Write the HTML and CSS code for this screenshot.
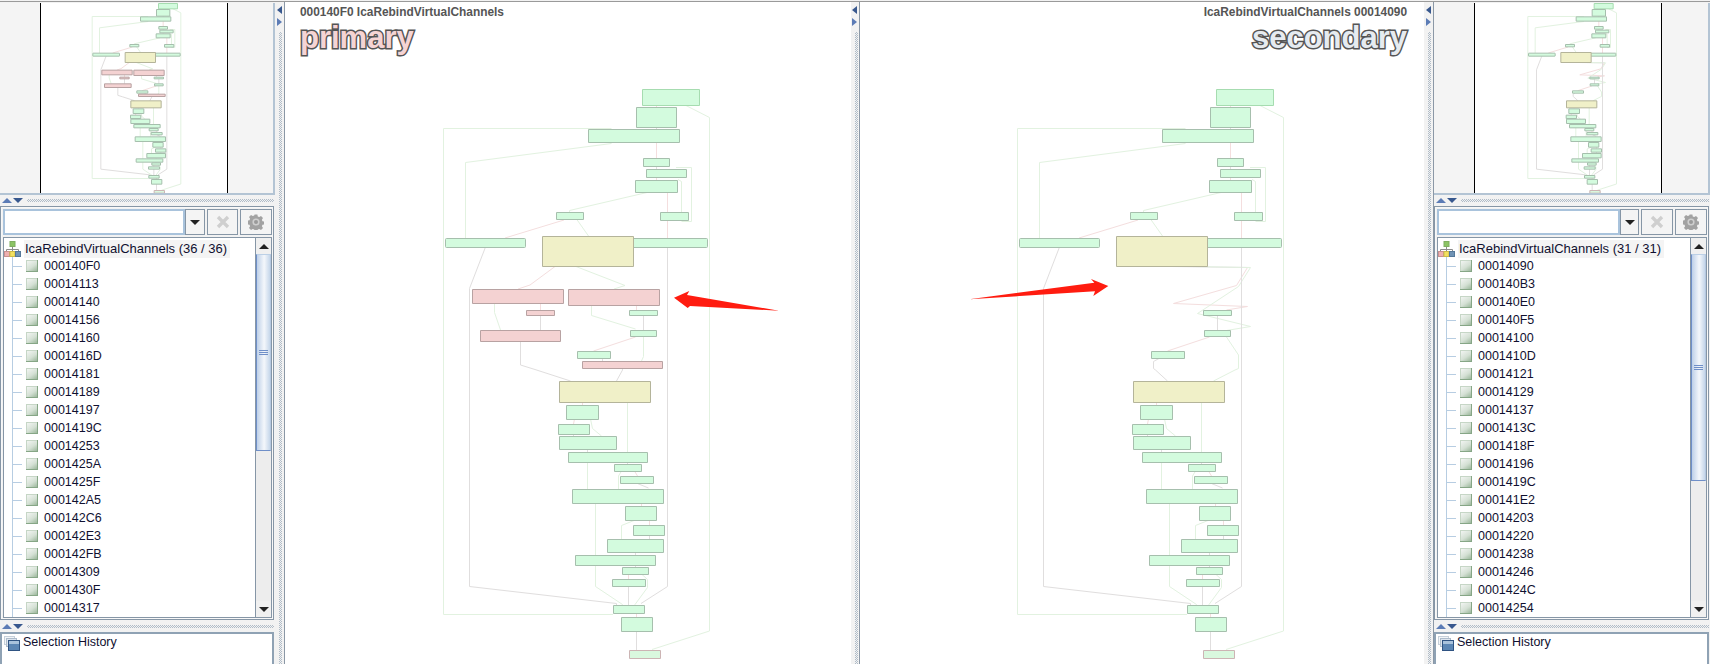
FILE: index.html
```html
<!DOCTYPE html>
<html lang="en">
<head>
  <meta charset="UTF-8">
  <title>Flow Graphs - IcaRebindVirtualChannels</title>
  <link rel="stylesheet" href="styles.css">
</head>
<body>

  <svg class="svg-defs" aria-hidden="true">
    <defs>
      <!-- blocks and edges both functions have in common, in primary coordinates -->
      <g id="common-graph">
        <polyline class="eg" points="685,105 709.5,117.5 709.5,631 652,649.5"/>
        <polyline class="ep" points="656.5,105 656.5,108"/>
        <polyline class="ek" points="656.5,127 656.5,130"/>
        <polyline class="ep" points="656.5,142 656.5,158"/>
        <polyline class="eg" points="611.5,128.5 443.5,128.5 443.5,614.5 613,614.5"/>
        <polyline class="eg" points="611.5,143.5 465.5,162.5 465.5,238"/>
        <polyline class="ek" points="656.5,166 656.5,170"/>
        <polyline class="ep" points="656.5,177 656.5,181"/>
        <polyline class="eg" points="676,167.5 691.5,167.5 691.5,221.5 681.5,221.5"/>
        <polyline class="eg" points="678,179.5 681.5,181.5 681.5,212"/>
        <polyline class="eg" points="647,192.5 569.5,210.5 569.5,212"/>
        <polyline class="ep" points="667.5,192 667.5,238"/>
        <polyline class="ek" points="667.5,247 667.5,586.5 641,603.5"/>
        <polyline class="ep" points="564,220 505,238"/>
        <polyline class="eg" points="576.5,219 588.5,236"/>
        <polyline class="ek" points="485.5,247 469.5,288.5 469.5,586.5 616.5,603.5 616.5,606"/>
        <polyline class="ek" points="643.5,315 643.5,330"/>
        <polyline class="ep" points="635.5,337 593.5,351"/>
        <polyline class="ep" points="582.5,402 582.5,405"/>
        <polyline class="eg" points="627.5,402 627.5,452"/>
        <polyline class="ep" points="574.5,419 573.5,424"/>
        <polyline class="eg" points="590.5,419 592.5,428.5 601.5,436"/>
        <polyline class="ek" points="573.5,434 573.5,436"/>
        <polyline class="ek" points="587.5,449 587.5,452"/>
        <polyline class="eg" points="587.5,462 587.5,489"/>
        <polyline class="ek" points="627.5,462 627.5,465"/>
        <polyline class="eg" points="621.5,471 618.5,476 618.5,489"/>
        <polyline class="ep" points="634.5,471 637.5,476"/>
        <polyline class="ek" points="637.5,483.5 648.5,488"/>
        <polyline class="ep" points="641.5,503 641.5,506"/>
        <polyline class="eg" points="595.5,503 595.5,586.5 622.5,604.5 622.5,606"/>
        <polyline class="eg" points="634,520.5 621.5,525.5 621.5,539"/>
        <polyline class="ep" points="649.5,520 649.5,525"/>
        <polyline class="ek" points="649.5,535 649.5,539"/>
        <polyline class="ek" points="635.5,552 635.5,555"/>
        <polyline class="ek" points="635.5,565 635.5,567"/>
        <polyline class="ep" points="628.5,574 628.5,579"/>
        <polyline class="eg" points="641.5,574 647.5,579.5 647.5,587.5 635,604.5 635,606"/>
        <polyline class="ek" points="628.5,586 628.5,605"/>
        <polyline class="ep" points="636.5,613 636.5,617"/>
        <polyline class="ek" points="636.5,631 636.5,650"/>

        <rect class="n-top" x="642.5" y="89.5" width="57" height="16"/>
        <rect class="n-g" x="636.5" y="107.5" width="40" height="20"/>
        <rect class="n-g" x="588.5" y="129.5" width="91" height="13"/>
        <rect class="n-g" x="643.5" y="158.5" width="26" height="8"/>
        <rect class="n-g" x="646.5" y="169.5" width="40" height="8"/>
        <rect class="n-g" x="635.5" y="180.5" width="42" height="12"/>
        <rect class="n-g" x="556.5" y="212.5" width="27" height="7"/>
        <rect class="n-g" x="660.5" y="212.5" width="28" height="8"/>
        <rect class="n-g" x="445.5" y="238.5" width="80" height="9" rx="1"/>
        <rect class="n-g" x="630.5" y="238.5" width="77" height="9" rx="1"/>
        <rect class="n-y" x="542.5" y="236.5" width="91" height="30"/>
        <rect class="n-g" x="629.5" y="310.5" width="28" height="5"/>
        <rect class="n-g" x="630.5" y="330.5" width="26" height="6"/>
        <rect class="n-g" x="577.5" y="351.5" width="33" height="7"/>
        <rect class="n-y" x="559.5" y="381.5" width="91" height="21"/>
        <rect class="n-g" x="566.5" y="405.5" width="32" height="14"/>
        <rect class="n-g" x="558.5" y="424.5" width="31" height="10"/>
        <rect class="n-g" x="559.5" y="436.5" width="57" height="13"/>
        <rect class="n-g" x="568.5" y="452.5" width="79" height="10"/>
        <rect class="n-g" x="614.5" y="464.5" width="27" height="7"/>
        <rect class="n-g" x="620.5" y="476.5" width="33" height="7"/>
        <rect class="n-g" x="572.5" y="489.5" width="91" height="14"/>
        <rect class="n-g" x="625.5" y="506.5" width="31" height="14"/>
        <rect class="n-g" x="633.5" y="525.5" width="31" height="10"/>
        <rect class="n-g" x="607.5" y="539.5" width="56" height="13"/>
        <rect class="n-g" x="575.5" y="555.5" width="80" height="10"/>
        <rect class="n-g" x="622.5" y="567.5" width="26" height="7"/>
        <rect class="n-g" x="612.5" y="579.5" width="33" height="7"/>
        <rect class="n-g" x="613.5" y="605.5" width="31" height="8"/>
        <rect class="n-g" x="621.5" y="617.5" width="31" height="14"/>
        <rect class="n-end" x="629.5" y="650.5" width="31" height="8"/>
      </g>

      <g id="primary-graph">
        <polyline class="ep" points="555,266.5 530,285 518,289"/>
        <polyline class="eg" points="576,266.5 625,285.5 614,289"/>
        <polyline class="eg" points="494.5,303 494.5,312.5 500.5,330"/>
        <polyline class="ep" points="540.5,303 540.5,310"/>
        <polyline class="ek" points="540.5,315 540.5,330"/>
        <polyline class="eg" points="591.5,305 591.5,315.5 635.5,329"/>
        <polyline class="ep" points="636.5,305 636.5,310"/>
        <polyline class="eg" points="643.5,336 643.5,356.5 641.5,361"/>
        <polyline class="ek" points="602.5,358 602.5,361"/>
        <polyline class="ek" points="520.5,341 520.5,365 535,369.5 570.5,381"/>
        <polyline class="ek" points="622.5,368 622.5,370 616.5,381"/>
        <use href="#common-graph"/>
        <rect class="n-r" x="472.5" y="289.5" width="91" height="14"/>
        <rect class="n-r" x="568.5" y="289.5" width="91" height="16"/>
        <rect class="n-r" x="526.5" y="310.5" width="28" height="5"/>
        <rect class="n-r" x="480.5" y="330.5" width="80" height="11"/>
        <rect class="n-r" x="582.5" y="361.5" width="80" height="7"/>
      </g>

      <g id="secondary-graph">
        <polyline class="ek" points="1173,266.5 1247.5,267.5"/>
        <polyline class="ep" points="1247.5,267.5 1236.5,285.5 1173.5,303.5 1247.5,306.5 1226.5,310"/>
        <polyline class="eg" points="1193,266.5 1250.5,267.5 1238.5,286.5 1197.5,313.5 1250.5,326.5 1226.5,330.5"/>
        <polyline class="eg" points="1226.5,337 1238.5,355 1238.5,368.5 1235,370 1213.5,381"/>
        <polyline class="ek" points="1159,358.5 1153.5,361.5 1153.5,368.5 1155.5,370 1167.5,381"/>
        <use href="#common-graph" transform="translate(574 0)"/>
      </g>

      <symbol id="icon-callgraph" viewBox="0 0 17 16">
        <path d="M8.5 5.5v3M2.500 11V8.500h12V11M8.500 8.500V11" fill="none" stroke="#8c8c8c"/>
        <rect x="6" y="0.500" width="5" height="5" fill="#8cc464" stroke="#7fae60"/>
        <rect x="0.500" y="10.500" width="5" height="5" fill="#eeb0b0" stroke="#c89090"/>
        <rect x="6" y="10.500" width="5" height="5" fill="#f2e060" stroke="#cdbb48"/>
        <rect x="11.500" y="10.500" width="5" height="5" fill="#6f93b5" stroke="#55789a"/>
      </symbol>

      <symbol id="icon-history" viewBox="0 0 16 15">
        <rect x="0.500" y="0.500" width="10" height="8" fill="#f2f5f8" stroke="#c6d0da"/>
        <rect x="2.500" y="2.500" width="10" height="8" fill="#dde5ee" stroke="#aebccb"/>
        <rect x="4.500" y="4.500" width="11" height="10" fill="#5c86b4" stroke="#2f5382"/>
        <rect x="5" y="5" width="10" height="3" fill="#a9c2dc"/>
      </symbol>

      <symbol id="icon-clear" viewBox="0 0 14 14">
        <path d="M2 2l10 10M12 2L2 12" stroke="#cfcfcf" stroke-width="3.400" fill="none"/>
      </symbol>

      <symbol id="icon-gear" viewBox="0 0 16 16">
        <path d="M6.600 0.500h2.800l.4 2 1.400.6 1.800-1.100 2 2-1.100 1.800.6 1.400 2 .4v2.800l-2 .4-.6 1.400 1.100 1.800-2 2-1.800-1.100-1.400.6-.4 2H6.600l-.4-2-1.400-.6-1.800 1.100-2-2 1.100-1.800-.6-1.400-2-.4V6.600l2-.4.6-1.400L1 3l2-2 1.800 1.100 1.400-.6z" fill="#a2a2a2"/>
        <circle cx="8" cy="8" r="3.600" fill="#cfcfcf"/>
        <circle cx="8" cy="8" r="2" fill="#9a9a9a"/>
      </symbol>
    </defs>
  </svg>

  <div class="app">

    <aside class="side">
      <div class="minimap">
        <svg class="minimap-view" viewBox="290 88 558 570"><use href="#primary-graph"/></svg>
      </div>
      <div class="hsplit"><i class="tri-up"></i><i class="tri-down"></i><b class="dots"></b></div>
      <section class="tree-panel">
        <div class="search">
          <input class="search-box" type="text" aria-label="Search">
          <button class="search-drop"><i class="tri-black"></i></button>
          <button class="search-btn"><svg class="btn-icon-x"><use href="#icon-clear"/></svg></button>
          <button class="search-btn"><svg class="btn-icon-gear"><use href="#icon-gear"/></svg></button>
        </div>
        <div class="tree">
          <div class="tree-body">
            <div class="tree-root">
              <svg class="root-icon"><use href="#icon-callgraph"/></svg>
              <span class="root-label">IcaRebindVirtualChannels (36 / 36)</span>
            </div>
            <ul class="tree-list">
              <li><i class="leaf"></i>000140F0</li>
              <li><i class="leaf"></i>00014113</li>
              <li><i class="leaf"></i>00014140</li>
              <li><i class="leaf"></i>00014156</li>
              <li><i class="leaf"></i>00014160</li>
              <li><i class="leaf"></i>0001416D</li>
              <li><i class="leaf"></i>00014181</li>
              <li><i class="leaf"></i>00014189</li>
              <li><i class="leaf"></i>00014197</li>
              <li><i class="leaf"></i>0001419C</li>
              <li><i class="leaf"></i>00014253</li>
              <li><i class="leaf"></i>0001425A</li>
              <li><i class="leaf"></i>0001425F</li>
              <li><i class="leaf"></i>000142A5</li>
              <li><i class="leaf"></i>000142C6</li>
              <li><i class="leaf"></i>000142E3</li>
              <li><i class="leaf"></i>000142FB</li>
              <li><i class="leaf"></i>00014309</li>
              <li><i class="leaf"></i>0001430F</li>
              <li><i class="leaf"></i>00014317</li>
            </ul>
          </div>
          <div class="scrollbar">
            <div class="scroll-btn"><i class="tri-black-up"></i></div>
            <div class="thumb thumb-primary"><i class="grip"></i></div>
            <div class="track"></div>
            <div class="scroll-btn"><i class="tri-black"></i></div>
          </div>
        </div>
      </section>
      <div class="hsplit hsplit-low"><i class="tri-up"></i><i class="tri-down"></i><b class="dots"></b></div>
      <section class="history">
        <svg class="history-icon"><use href="#icon-history"/></svg>
        <span>Selection History</span>
      </section>
    </aside>

    <div class="vsplit"><i class="tri-left"></i><i class="tri-right"></i><b class="vdots"></b></div>

    <main class="graph graph-primary">
      <svg class="graph-canvas" viewBox="285 0 566 664">
        <use href="#primary-graph"/>
        <polygon class="arrow" points="674,297.700 689.300,291 687,295 779,310.700 690,306 687.700,308"/>
      </svg>
      <div class="graph-head">
        <div class="graph-title">000140F0 IcaRebindVirtualChannels</div>
        <div class="graph-tag tag-primary">primary</div>
      </div>
    </main>

    <div class="vsplit vsplit-mid"><i class="tri-left"></i><i class="tri-right"></i><b class="vdots"></b></div>

    <main class="graph graph-secondary">
      <svg class="graph-canvas" viewBox="860 0 564 664">
        <use href="#secondary-graph"/>
        <polygon class="arrow" points="1108.300,286 1091,279 1094.300,282.700 969.300,299.300 1095,291.300 1093.300,296"/>
      </svg>
      <div class="graph-head head-right">
        <div class="graph-title">IcaRebindVirtualChannels 00014090</div>
        <div class="graph-tag tag-secondary">secondary</div>
      </div>
    </main>

    <div class="vsplit"><i class="tri-left"></i><i class="tri-right"></i><b class="vdots"></b></div>

    <aside class="side side-right">
      <div class="minimap">
        <svg class="minimap-view" viewBox="859 88 558 570"><use href="#secondary-graph"/></svg>
      </div>
      <div class="hsplit"><i class="tri-up"></i><i class="tri-down"></i><b class="dots"></b></div>
      <section class="tree-panel">
        <div class="search">
          <input class="search-box" type="text" aria-label="Search">
          <button class="search-drop"><i class="tri-black"></i></button>
          <button class="search-btn"><svg class="btn-icon-x"><use href="#icon-clear"/></svg></button>
          <button class="search-btn"><svg class="btn-icon-gear"><use href="#icon-gear"/></svg></button>
        </div>
        <div class="tree">
          <div class="tree-body">
            <div class="tree-root">
              <svg class="root-icon"><use href="#icon-callgraph"/></svg>
              <span class="root-label">IcaRebindVirtualChannels (31 / 31)</span>
            </div>
            <ul class="tree-list">
              <li><i class="leaf"></i>00014090</li>
              <li><i class="leaf"></i>000140B3</li>
              <li><i class="leaf"></i>000140E0</li>
              <li><i class="leaf"></i>000140F5</li>
              <li><i class="leaf"></i>00014100</li>
              <li><i class="leaf"></i>0001410D</li>
              <li><i class="leaf"></i>00014121</li>
              <li><i class="leaf"></i>00014129</li>
              <li><i class="leaf"></i>00014137</li>
              <li><i class="leaf"></i>0001413C</li>
              <li><i class="leaf"></i>0001418F</li>
              <li><i class="leaf"></i>00014196</li>
              <li><i class="leaf"></i>0001419C</li>
              <li><i class="leaf"></i>000141E2</li>
              <li><i class="leaf"></i>00014203</li>
              <li><i class="leaf"></i>00014220</li>
              <li><i class="leaf"></i>00014238</li>
              <li><i class="leaf"></i>00014246</li>
              <li><i class="leaf"></i>0001424C</li>
              <li><i class="leaf"></i>00014254</li>
            </ul>
          </div>
          <div class="scrollbar">
            <div class="scroll-btn"><i class="tri-black-up"></i></div>
            <div class="thumb thumb-secondary"><i class="grip"></i></div>
            <div class="track"></div>
            <div class="scroll-btn"><i class="tri-black"></i></div>
          </div>
        </div>
      </section>
      <div class="hsplit hsplit-low"><i class="tri-up"></i><i class="tri-down"></i><b class="dots"></b></div>
      <section class="history">
        <svg class="history-icon"><use href="#icon-history"/></svg>
        <span>Selection History</span>
      </section>
    </aside>

  </div>

</body>
</html>
```

FILE: styles.css
```css
* {
  box-sizing: border-box;
}
html, body {
  margin: 0;
  height: 100%;
  overflow: hidden;
}
body {
  background-color: #f2f2f2;
  font-family: "Liberation Sans", Arial, sans-serif;
  font-size: 12.5px;
  color: #101030;
  padding-top: 1px;
}
.svg-defs {
  position: absolute;
  width: 0;
  height: 0;
}
.app {
  display: flex;
  height: 663px;
  border-top: 1px solid #9a9a9a;
}

/* side columns */
.side {
  width: 275px;
  flex: none;
  display: flex;
  flex-direction: column;
  padding-top: 1px;
}
.side-right {
  width: 276px;
}
.minimap {
  height: 192px;
  flex: none;
  padding-left: 40px;
  background-color: #f4f4f4;
  border-right: 2px solid #b3c4d4;
  border-bottom: 2px solid #b3c4d4;
}
.minimap-view {
  display: block;
  width: 188px;
  height: 190px;
  background-color: #fff;
  border-left: 1px solid #000;
  border-right: 1px solid #000;
}

/* splitters */
.hsplit {
  height: 11px;
  flex: none;
  display: flex;
  align-items: center;
  gap: 1px;
  padding-left: 2px;
}
.hsplit-low {
  height: 12px;
}
.dots {
  flex: 1;
  height: 3px;
  margin: 0 1px 0 3px;
  background-image: conic-gradient(#b0bcc8 25%, transparent 0 50%, #b0bcc8 0 75%, transparent 0);
  background-size: 2px 2px;
}
.tri-up, .tri-down, .tri-black, .tri-black-up {
  display: block;
  width: 0;
  height: 0;
  border-left: 5px solid transparent;
  border-right: 5px solid transparent;
}
.tri-up {
  border-bottom: 5px solid #5c7cb6;
}
.tri-down {
  border-top: 5px solid #38588e;
}
.tri-black {
  border-top: 5px solid #222;
}
.tri-black-up {
  border-bottom: 5px solid #222;
}
.vsplit {
  width: 10px;
  flex: none;
  position: relative;
  border-right: 1px solid #8b98a6;
  padding: 4px 0 0 2px;
}
.vsplit-mid {
  width: 9px;
  padding-left: 1px;
}
.tri-left, .tri-right {
  display: block;
  width: 0;
  height: 0;
  border-top: 4px solid transparent;
  border-bottom: 4px solid transparent;
  margin-bottom: 4px;
}
.tri-left {
  border-right: 5px solid #38588e;
}
.tri-right {
  border-left: 5px solid #5c7cb6;
}
.vdots {
  position: absolute;
  left: 4px;
  top: 30px;
  bottom: 0;
  width: 3px;
  background-image: conic-gradient(#b0bcc8 25%, transparent 0 50%, #b0bcc8 0 75%, transparent 0);
  background-size: 2px 2px;
}

/* search row + tree */
.tree-panel {
  height: 414px;
  flex: none;
  margin-right: 1px;
  border: 1px solid #8696a6;
  box-shadow: 0 0 0 1px #f8f8f8 inset;
  padding: 2px 1px 1px 2px;
  display: flex;
  flex-direction: column;
}
.search {
  display: flex;
  height: 27px;
  flex: none;
  gap: 1px;
  margin-bottom: 1px;
}
.search-box {
  width: 184px;
  height: 26px;
  border: 2px solid #a9c3dc;
  background-color: #fff;
  margin: 0;
  padding: 0;
}
.search-drop, .search-btn {
  height: 26px;
  margin: 0;
  padding: 0;
  border: 1px solid #8696a6;
  background-color: #f4f4f4;
  display: flex;
  align-items: center;
  justify-content: center;
}
.search-drop {
  width: 20px;
  margin-left: -1px;
}
.search-btn {
  width: 32px;
  margin-left: 1px;
}
.btn-icon-x {
  width: 14px;
  height: 14px;
}
.btn-icon-gear {
  width: 16px;
  height: 16px;
}
.tree {
  flex: 1;
  min-height: 0;
  display: flex;
  background-color: #fff;
  border: 1px solid #8696a6;
}
.tree-body {
  flex: 1;
  min-width: 0;
  overflow: hidden;
}
.tree-root {
  height: 18px;
  display: flex;
  align-items: center;
  margin-top: 2px;
  margin-bottom: -1px;
}
.root-icon {
  width: 17px;
  height: 16px;
  margin-left: 0;
  flex: none;
}
.root-label {
  margin-left: 3px;
  padding: 0 3px 0 1px;
  font-size: 13px;
  line-height: 18px;
  background-color: #f4f4f4;
  white-space: nowrap;
}
.tree-list {
  list-style: none;
  margin: 0 0 0 8px;
  padding: 0;
  border-left: 1px solid #b7cde2;
}
.tree-list li {
  height: 18px;
  display: flex;
  align-items: center;
  line-height: 18px;
}
.tree-list li::before {
  content: "";
  width: 9px;
  height: 1px;
  background-color: #b7cde2;
  margin-right: 4px;
  flex: none;
}
.leaf {
  display: block;
  width: 12px;
  height: 12px;
  flex: none;
  margin-right: 6px;
  background: linear-gradient(145deg, #f1f4f1 10%, #d4e0d4 55%, #8fae8f);
  box-shadow: inset -1px -1px 0 #86a686, inset 1px 1px 0 #c6d6c6;
}

/* scrollbar */
.scrollbar {
  width: 16px;
  flex: none;
  display: flex;
  flex-direction: column;
  border-left: 1px solid #8696a6;
}
.scroll-btn {
  height: 16px;
  flex: none;
  background-color: #f0f0f0;
  display: flex;
  align-items: center;
  justify-content: center;
}
.thumb {
  flex: none;
  display: flex;
  align-items: center;
  justify-content: center;
  background: linear-gradient(90deg, #bed0e8, #f4f7fb 55%, #c5d6ea);
  border: 1px solid #6f8fc8;
  border-right-color: #b5c8e0;
  border-top: 1px solid #bcd0e6;
}
.thumb-primary {
  height: 197px;
}
.thumb-secondary {
  height: 227px;
}
.grip {
  display: block;
  width: 9px;
  height: 5px;
  border-top: 1px solid #6f8fc8;
  border-bottom: 1px solid #6f8fc8;
  background: linear-gradient(#6f8fc8, #6f8fc8) center / 100% 1px no-repeat;
}
.track {
  flex: 1;
  background-color: #ededed;
}

/* selection history */
.history {
  flex: 1;
  min-height: 0;
  margin-right: 1px;
  display: flex;
  align-items: flex-start;
  background-color: #fff;
  border: 2px solid #8fa2b4;
  border-bottom: none;
  padding: 1px 0 0 2px;
  line-height: 15px;
}
.history-icon {
  width: 16px;
  height: 15px;
  margin: 1px 3px 0 0;
  flex: none;
}

/* graph views */
.graph {
  position: relative;
  flex: none;
  background-color: #fff;
  overflow: hidden;
}
.graph-primary {
  width: 566px;
}
.graph-secondary {
  width: 564px;
}
.graph-canvas {
  position: absolute;
  left: 0;
  top: -2px;
  width: 100%;
  height: 664px;
}
.graph-head {
  position: relative;
  padding: 3px 17px 0 15px;
}
.head-right {
  text-align: right;
}
.graph-title {
  font-size: 11.9px;
  font-weight: bold;
  line-height: 15px;
  color: #555;
}
.graph-tag {
  font-weight: bold;
  font-size: 31px;
  line-height: 32px;
  margin-top: 2px;
  -webkit-text-stroke: 3px #555;
  paint-order: stroke fill;
}
.tag-primary {
  color: #f5d4d4;
}
.tag-secondary {
  color: #e6ebf0;
}

/* graph shapes */
.n-g, .n-top, .n-y, .n-r, .n-end, .eg, .ep, .ek {
  vector-effect: non-scaling-stroke;
  stroke-width: 1px;
}
.n-g {
  fill: #d3fbde;
  stroke: #a6bfad;
}
.n-top {
  fill: #d3fbde;
  stroke: #a6dcb0;
}
.n-y {
  fill: #f0f0c8;
  stroke: #b4b49a;
}
.n-r {
  fill: #f4d2d2;
  stroke: #b8a2a2;
}
.n-end {
  fill: #d9f8de;
  stroke: #ccb4b4;
}
.eg, .ep, .ek {
  fill: none;
}
.eg {
  stroke: #e2f2e0;
}
.ep {
  stroke: #f4dede;
}
.ek {
  stroke: #e0dede;
}
.arrow {
  fill: #ff1c10;
}
```
